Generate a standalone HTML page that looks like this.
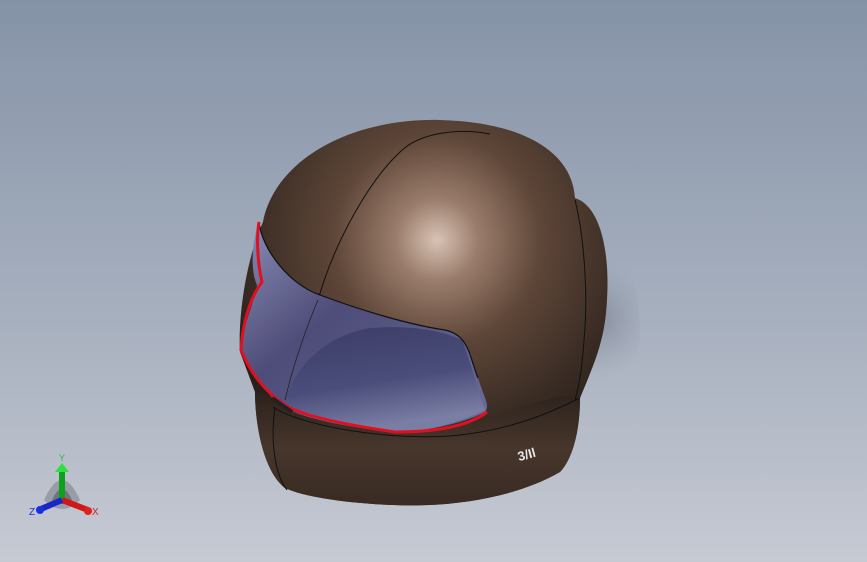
<!DOCTYPE html>
<html><head><style>
html,body{margin:0;padding:0;width:867px;height:562px;overflow:hidden;}
svg{display:block}
</style></head><body>
<svg width="867" height="562" viewBox="0 0 867 562" xmlns="http://www.w3.org/2000/svg">
<defs>
<linearGradient id="bg" x1="0" y1="0" x2="0" y2="1">
<stop offset="0" stop-color="#8593a7"/>
<stop offset="0.55" stop-color="#a6afbe"/>
<stop offset="1" stop-color="#c6cad3"/>
</linearGradient>
<radialGradient id="shell" cx="437" cy="240" r="230" gradientUnits="userSpaceOnUse">
<stop offset="0" stop-color="#d8c3b5"/>
<stop offset="0.18" stop-color="#9a7c6b"/>
<stop offset="0.45" stop-color="#5e4638"/>
<stop offset="0.8" stop-color="#3a2c24"/>
<stop offset="1" stop-color="#2a201b"/>
</radialGradient>
<linearGradient id="chin" x1="0" y1="0" x2="0" y2="1">
<stop offset="0" stop-color="#2c221c"/>
<stop offset="0.5" stop-color="#4a382d"/>
<stop offset="1" stop-color="#3a2c24"/>
</linearGradient>
<linearGradient id="visor" x1="0" y1="0" x2="1" y2="1">
<stop offset="0" stop-color="#8a8fb8"/>
<stop offset="0.4" stop-color="#4e4c78"/>
<stop offset="1" stop-color="#6a6e9a"/>
</linearGradient>
<linearGradient id="inner" x1="0" y1="0" x2="0.3" y2="1">
<stop offset="0" stop-color="#3c3d66"/>
<stop offset="0.6" stop-color="#4a4d7a"/>
<stop offset="1" stop-color="#7a7ea4"/>
</linearGradient>
<radialGradient id="shadow" cx="595" cy="320" r="60" gradientUnits="userSpaceOnUse">
<stop offset="0" stop-color="#5a6070" stop-opacity="0.45"/>
<stop offset="1" stop-color="#8a93a5" stop-opacity="0"/>
</radialGradient>
</defs>
<rect width="867" height="562" fill="url(#bg)"/>
<ellipse cx="605" cy="330" rx="35" ry="80" fill="url(#shadow)"/>
<path d="M263,222 C275,160 350,118 440,120 C520,122 572,150 575,198 C600,206 610,250 607,300 C605,340 595,362 580,398 C580,432 572,460 560,472 C520,495 470,503 430,505 C380,507 310,500 285,488 C262,470 255,420 255,392 L240,352 C238,320 245,262 263,222 Z" fill="url(#shell)"/>
<path d="M270,395 C330,425 420,440 480,420 C530,405 565,390 580,398 C580,432 572,460 560,472 C520,495 470,503 430,505 C380,507 310,500 285,488 C262,470 255,420 255,392 Z" fill="url(#chin)" opacity="0.9"/>
<path d="M273,407 C300,425 380,440 450,436 C520,430 565,405 580,398" fill="none" stroke="#111" stroke-width="1"/>
<path d="M575,200 C585,240 588,300 584,340 C582,370 578,390 575,400" fill="none" stroke="#111" stroke-width="1"/>
<path d="M490,134 C460,128 420,132 400,152 C370,180 335,240 318,300" fill="none" stroke="#111" stroke-width="1"/>
<path d="M275,407 C270,440 275,475 287,490" fill="none" stroke="#111" stroke-width="1"/>
<path d="M259,222 C262,250 290,285 320,295 C360,310 410,325 445,330 C470,335 470,360 478,378 C485,400 490,405 485,412 C460,425 420,432 395,432 C350,428 305,418 290,410 L272,398 C260,380 245,362 240,350 C245,320 255,300 257,285 C250,270 252,240 259,222 Z" fill="url(#visor)"/>
<path d="M287,395 C300,360 330,335 370,328 C410,325 440,330 462,340 C470,360 475,380 485,410 C455,425 420,432 395,432 C350,428 305,418 290,410 Z" fill="url(#inner)"/>
<path d="M259,222 C262,250 290,285 320,295 C360,310 410,325 445,330 C470,335 470,360 478,378" fill="none" stroke="#111" stroke-width="1.2"/>
<path d="M318,300 C305,330 292,370 285,400" fill="none" stroke="#222" stroke-width="0.8"/>
<path d="M259,222 C256,240 258,265 262,282 C248,300 242,330 241,350 C250,372 265,392 285,405 C300,415 340,424 395,432 C440,432 470,425 487,412" fill="none" stroke="#e01020" stroke-width="3"/>
<path d="M272,398 L292,412" stroke="#222" stroke-width="4"/>
<text x="517" y="458" font-family="Liberation Sans, sans-serif" font-size="13" font-weight="bold" fill="#e8e8e8" transform="rotate(-15 530 452)">3/Il</text>
<g>
<path d="M44,500 Q62,460 80,500 Q62,518 44,500 Z" fill="#6a6e78" opacity="0.45"/>
<path d="M52,500 Q62,478 72,500 Q62,508 52,500 Z" fill="#55585f" opacity="0.6"/>
<rect x="59" y="470" width="6" height="30" fill="#10a020"/>
<path d="M55,472 L62,463 L69,472 Z" fill="#30e040"/>
<line x1="62" y1="500" x2="88" y2="510" stroke="#d01818" stroke-width="6"/>
<circle cx="88" cy="511" r="4" fill="#e02020"/>
<line x1="62" y1="500" x2="41" y2="509" stroke="#1828c8" stroke-width="6"/>
<circle cx="40" cy="510" r="4" fill="#1830e0"/>
<text x="59" y="461" font-family="Liberation Sans, sans-serif" font-size="9" fill="#20c030">Y</text>
<text x="92" y="515" font-family="Liberation Sans, sans-serif" font-size="10" fill="#e02020">X</text>
<text x="29" y="515" font-family="Liberation Sans, sans-serif" font-size="10" fill="#1830e0">Z</text>
</g>
</svg>
</body></html>
